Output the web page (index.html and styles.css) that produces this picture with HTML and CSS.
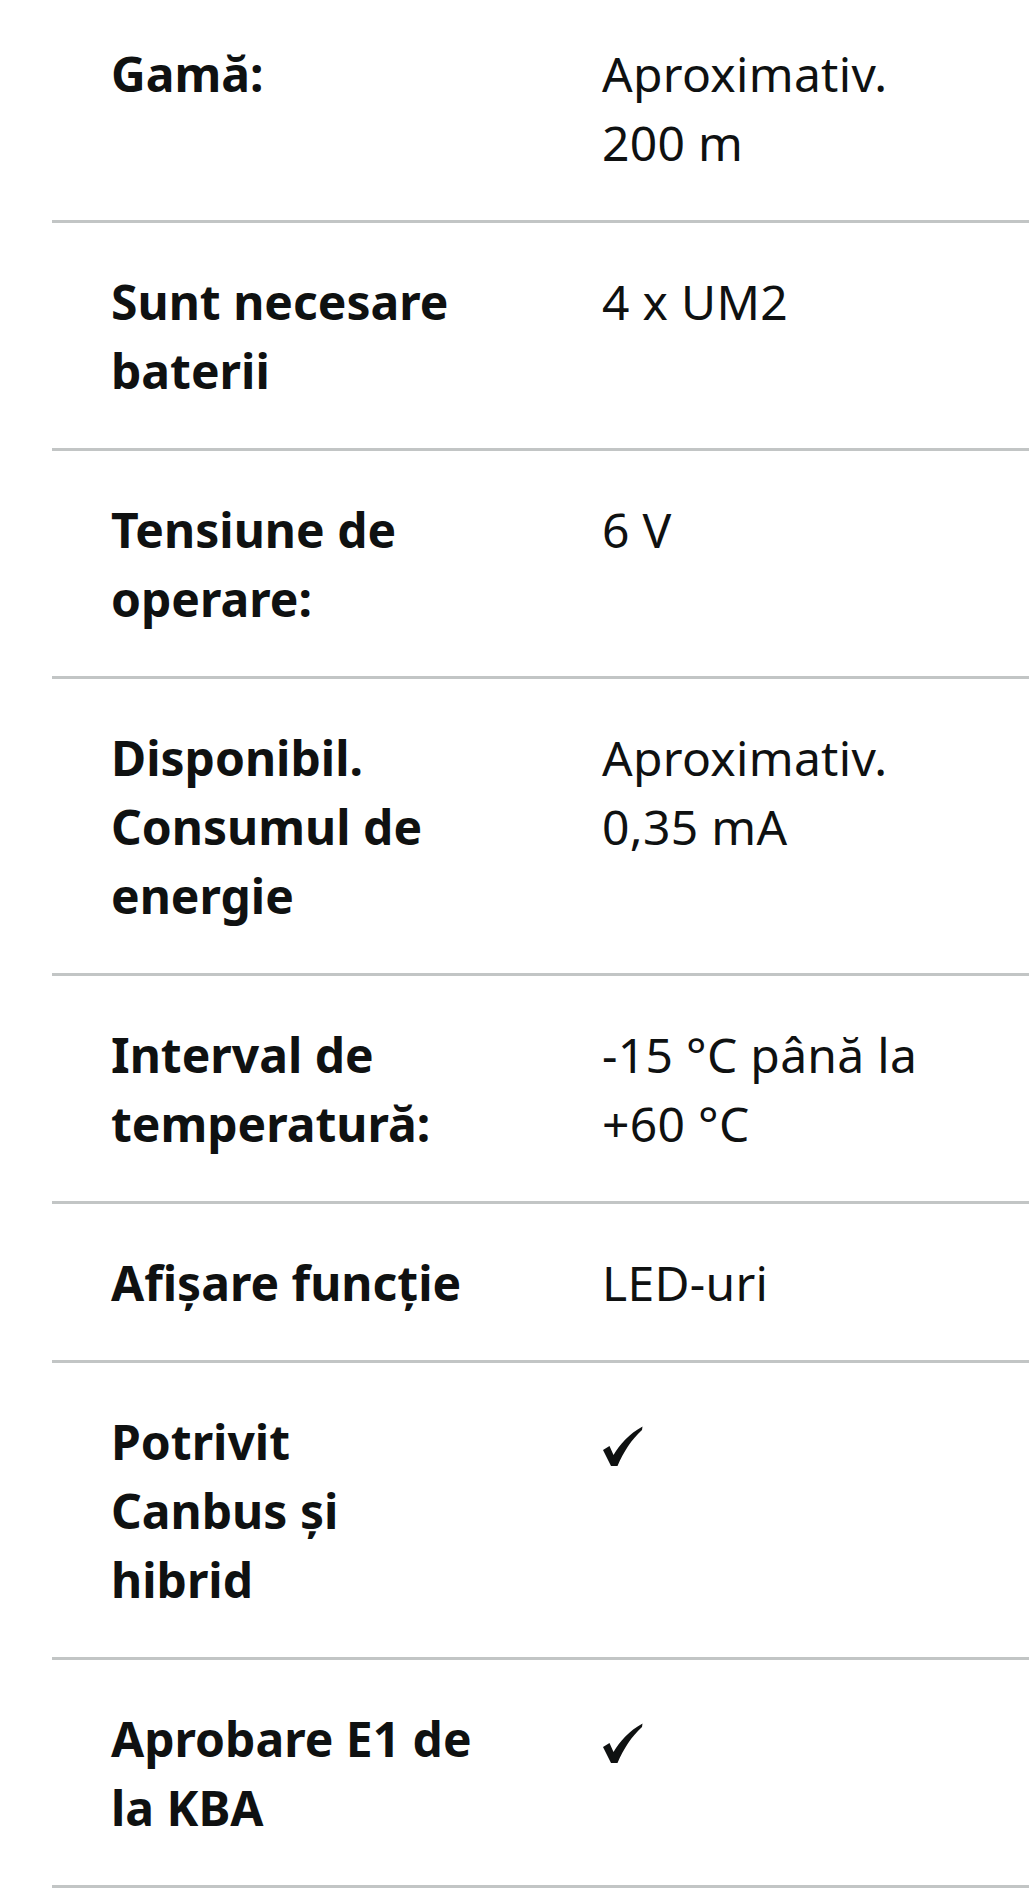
FILE: index.html
```html
<!DOCTYPE html>
<html lang="ro">
<head>
  <meta charset="UTF-8">
  <meta name="viewport" content="width=device-width, initial-scale=1.0">
  <title>Specificații</title>
  <link rel="stylesheet" href="styles.css">
</head>
<body>
  <div class="spec-list">
    <div class="spec-row">
      <div class="spec-label">Gamă:</div>
      <div class="spec-value">Aproximativ.<br>200 m</div>
    </div>
    <div class="spec-row">
      <div class="spec-label">Sunt necesare<br>baterii</div>
      <div class="spec-value">4 x UM2</div>
    </div>
    <div class="spec-row">
      <div class="spec-label">Tensiune de<br>operare:</div>
      <div class="spec-value">6 V</div>
    </div>
    <div class="spec-row">
      <div class="spec-label">Disponibil.<br>Consumul de<br>energie</div>
      <div class="spec-value">Aproximativ.<br>0,35 mA</div>
    </div>
    <div class="spec-row">
      <div class="spec-label">Interval de<br>temperatură:</div>
      <div class="spec-value">-15 °C până la<br>+60 °C</div>
    </div>
    <div class="spec-row">
      <div class="spec-label">Afișare funcție</div>
      <div class="spec-value">LED-uri</div>
    </div>
    <div class="spec-row">
      <div class="spec-label">Potrivit<br>Canbus și<br>hibrid</div>
      <div class="spec-value">
        <svg class="check" viewBox="0 0 40 40" aria-label="da"><path d="M0 24 L6.5 20 L10.5 29 C17 18 26 8 39.5 0.5 L39 4 C28.5 13.5 20.5 26 14.5 40 L8 40 Z"/></svg>
      </div>
    </div>
    <div class="spec-row">
      <div class="spec-label">Aprobare E1 de<br>la KBA</div>
      <div class="spec-value">
        <svg class="check" viewBox="0 0 40 40" aria-label="da"><path d="M0 24 L6.5 20 L10.5 29 C17 18 26 8 39.5 0.5 L39 4 C28.5 13.5 20.5 26 14.5 40 L8 40 Z"/></svg>
      </div>
    </div>
  </div>
</body>
</html>
```

FILE: styles.css
```css
body {
  margin: 0;
  background-color: #ffffff;
  color: #0f1111;
  font-family: "Noto Sans", "DejaVu Sans", sans-serif;
  font-size: 48px;
  line-height: 69px;
}
.spec-list {
  margin-top: -5px;
  margin-left: 52px;
}
.spec-row {
  display: grid;
  grid-template-columns: 491px 1fr;
  padding: 44px 0 43px 59px;
  border-bottom: 3px solid #c2c5c5;
}
.spec-label {
  font-weight: 700;
  white-space: nowrap;
}
.spec-value {
  white-space: nowrap;
  letter-spacing: 0.3px;
}
.check {
  width: 40px;
  height: 40px;
  margin-left: 1px;
  vertical-align: -6px;
  fill: #0f1111;
}
```
